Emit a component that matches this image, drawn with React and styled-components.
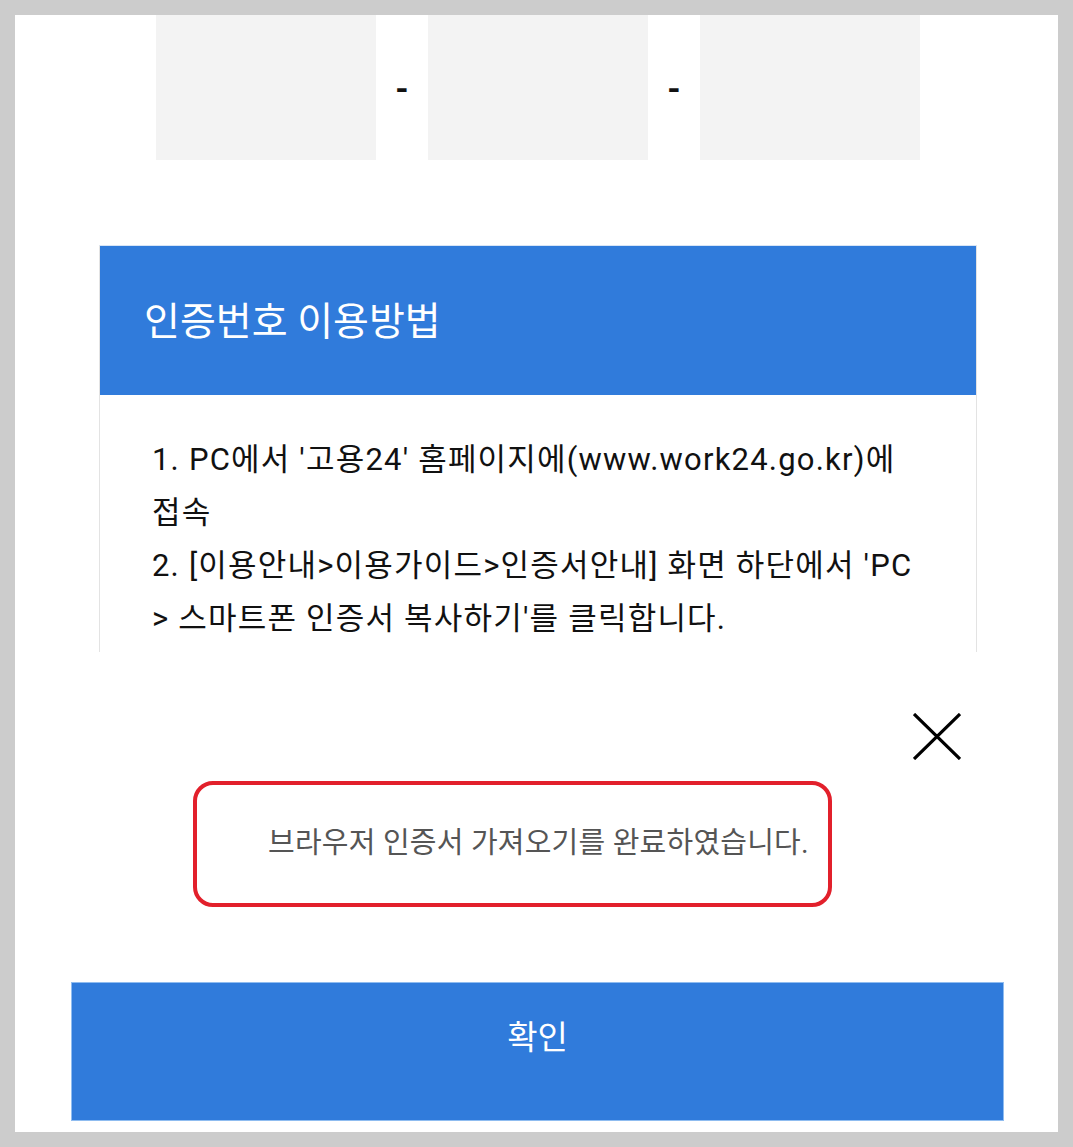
import React from 'react';
import styled, { createGlobalStyle } from 'styled-components';

const GlobalStyle = createGlobalStyle`
  body {
    margin: 0;
    background: #cccccc;
    font-family: Roboto, "Noto Sans CJK KR", sans-serif;
  }
`;

const Frame = styled.div`
  padding: 15px;
`;

const Panel = styled.div`
  width: 1043px;
  height: 1117px;
  background: #ffffff;
  display: flex;
  flex-direction: column;
  overflow: hidden;
`;

const ScrollArea = styled.div`
  height: 637px;
  overflow: hidden;
  display: flex;
  flex-direction: column;
  align-items: center;
  flex-shrink: 0;
`;

const InputRow = styled.div`
  display: flex;
  align-items: center;
  margin-left: 3px;
`;

const InputBox = styled.div`
  width: 220px;
  height: 145px;
  background: #f3f3f3;
`;

const Separator = styled.span`
  width: 52px;
  text-align: center;
  font-size: 34px;
  font-weight: 700;
  color: #111;
`;

const Card = styled.div`
  width: 876px;
  margin-top: 85px;
  margin-left: 3px;
  border: 1px solid #e3e3e3;
  border-top-color: #d7e5f6;
  flex-shrink: 0;
`;

const CardHeader = styled.div`
  height: 149px;
  box-sizing: border-box;
  background: #307bdb;
  color: #fff;
  display: flex;
  align-items: center;
  padding: 0 0 6px 44px;
  font-size: 39px;
`;

const CardBody = styled.div`
  padding: 38px 40px 40px 52px;
  font-size: 31px;
  letter-spacing: 1.2px;
  line-height: 53px;
  color: #111;
`;

const Line = styled.div`
  white-space: nowrap;
`;

const CloseRow = styled.div`
  margin-top: 61px;
  display: flex;
  justify-content: flex-end;
  padding-right: 97px;
`;

const CloseButton = styled.button`
  width: 48px;
  height: 47px;
  padding: 0;
  border: none;
  background: none;
  display: block;
`;

const MessageBox = styled.div`
  margin-top: 21px;
  margin-left: 178px;
  width: 639px;
  height: 126px;
  box-sizing: border-box;
  border: 4px solid #e2202b;
  border-radius: 20px;
  display: flex;
  align-items: center;
  padding: 0 0 8px 71px;
  font-size: 29px;
  letter-spacing: 0.2px;
  color: #555;
  white-space: nowrap;
`;

const ConfirmButton = styled.button`
  margin-top: 75px;
  margin-left: 56px;
  width: 933px;
  height: 139px;
  box-sizing: border-box;
  border: 1px solid #8fbcf0;
  background: #307bdb;
  color: #fff;
  font-family: Roboto, "Noto Sans CJK KR", sans-serif;
  font-size: 33px;
  display: flex;
  justify-content: center;
  align-items: flex-start;
  padding-top: 28px;
`;

function App() {
  return (
    <Frame>
      <GlobalStyle />
      <Panel>
        <ScrollArea>
          <InputRow>
            <InputBox />
            <Separator>-</Separator>
            <InputBox />
            <Separator>-</Separator>
            <InputBox />
          </InputRow>
          <Card>
            <CardHeader>인증번호 이용방법</CardHeader>
            <CardBody>
              <Line>1. PC에서 '고용24' 홈페이지에(www.work24.go.kr)에</Line>
              <Line>접속</Line>
              <Line>2. [이용안내&gt;이용가이드&gt;인증서안내] 화면 하단에서 'PC</Line>
              <Line>&gt; 스마트폰 인증서 복사하기'를 클릭합니다.</Line>
            </CardBody>
          </Card>
        </ScrollArea>
        <CloseRow>
          <CloseButton aria-label="닫기">
            <svg width="48" height="47" viewBox="0 0 48 47">
              <path d="M1 1 L47 46 M47 1 L1 46" stroke="#000" strokeWidth="3.2" fill="none" />
            </svg>
          </CloseButton>
        </CloseRow>
        <MessageBox>브라우저 인증서 가져오기를 완료하였습니다.</MessageBox>
        <ConfirmButton>확인</ConfirmButton>
      </Panel>
    </Frame>
  );
}

export default App;
